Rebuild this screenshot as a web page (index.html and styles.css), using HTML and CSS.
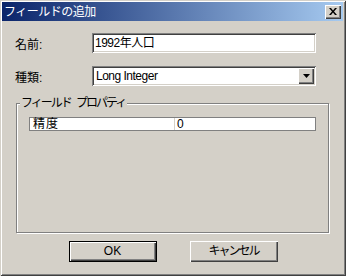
FILE: index.html
```html
<!DOCTYPE html>
<html>
<head>
  <title>フィールドの追加</title>
  <link rel="stylesheet" href="styles.css">
</head>
<body>
  <div class="window">
    <div class="titlebar">
      <span class="title">フィールドの追加</span>
      <span class="close-btn">
        <svg width="8" height="7" viewBox="0 0 8 7">
          <path d="M0 0h2l2 2.5L6 0h2L5 3.5 8 7H6L4 4.5 2 7H0l3-3.5z" fill="#000"/>
        </svg>
      </span>
    </div>

    <div class="content">
      <div class="form-row">
        <span class="label">名前:</span>
        <div class="textbox">1992年人口</div>
      </div>

      <div class="form-row second">
        <span class="label">種類:</span>
        <div class="textbox combo">
          <span class="combo-text">Long Integer</span>
          <span class="combo-btn">
            <svg width="7" height="4" viewBox="0 0 7 4">
              <path d="M0 0h7L3.5 4z" fill="#000"/>
            </svg>
          </span>
        </div>
      </div>

      <div class="group">
        <span class="legend">フィールド プロパティ</span>
        <div class="prop-table">
          <div class="prop-name">精度</div>
          <div class="prop-value">0</div>
        </div>
      </div>

      <div class="buttons">
        <div class="btn default">OK</div>
        <div class="btn kana">キャンセル</div>
      </div>
    </div>
  </div>
</body>
</html>
```

FILE: styles.css
```css
body {
  margin: 0;
  background: #D4D0C8;
  font-family: "Liberation Sans", "Noto Sans CJK JP", sans-serif;
  font-size: 12px;
  color: #000;
}

.window {
  width: 346px;
  height: 276px;
  box-sizing: border-box;
  padding: 2px 3px 3px 2px;
  background: #D4D0C8;
  box-shadow: inset 1px 1px 0 #D4D0C8, inset -1px -1px 0 #404040,
              inset 2px 2px 0 #fff, inset -2px -2px 0 #808080;
}

.titlebar {
  height: 19px;
  display: flex;
  align-items: center;
  justify-content: space-between;
  padding: 0 2px 0 2px;
  background: linear-gradient(to right, #0A246A, #A6CAF0);
}

.title {
  color: #fff;
  line-height: 18px;
  letter-spacing: -0.5px;
}

.close-btn {
  width: 16px;
  height: 14px;
  display: flex;
  align-items: center;
  justify-content: center;
  background: #D4D0C8;
  box-shadow: inset 1px 1px 0 #fff, inset -1px -1px 0 #404040,
              inset -2px -2px 0 #808080;
}

.content {
  padding: 12px 12px 0 13px;
}

.form-row {
  display: flex;
  align-items: center;
  height: 20px;
}

.form-row.second {
  margin-top: 13px;
}

.label {
  width: 77px;
}

.textbox {
  width: 224px;
  height: 20px;
  box-sizing: border-box;
  padding: 0 3px;
  line-height: 20px;
  letter-spacing: -0.5px;
  background: #fff;
  box-shadow: inset 1px 1px 0 #808080, inset -1px -1px 0 #fff,
              inset 2px 2px 0 #404040, inset -2px -2px 0 #D4D0C8;
}

.combo {
  display: flex;
  align-items: center;
  justify-content: space-between;
  padding: 2px 2px 2px 4px;
  line-height: 16px;
}

.combo-btn {
  width: 16px;
  height: 16px;
  display: flex;
  align-items: center;
  justify-content: center;
  background: #D4D0C8;
  box-shadow: inset 1px 1px 0 #fff, inset -1px -1px 0 #404040,
              inset -2px -2px 0 #808080;
}

.group {
  position: relative;
  margin: 17px 0 0 1px;
  width: 313px;
  height: 130px;
  box-sizing: border-box;
  border: 1px solid #808080;
  box-shadow: 1px 1px 0 #fff, inset 1px 1px 0 #fff;
}

.legend {
  position: absolute;
  top: -8px;
  left: 3px;
  padding: 0 2px 0 1px;
  line-height: 14px;
  letter-spacing: -2px;
  word-spacing: 4px;
  background: #D4D0C8;
}

.prop-table {
  display: flex;
  margin: 13px 0 0 12px;
  width: 287px;
  height: 14px;
  box-sizing: border-box;
  border: 1px solid #808080;
  background: #fff;
  line-height: 12px;
}

.prop-name {
  width: 141px;
  padding-left: 3px;
  border-right: 1px solid #D4D0C8;
  letter-spacing: 1px;
}

.prop-value {
  flex: 1;
  padding-left: 2px;
}

.buttons {
  display: flex;
  justify-content: center;
  gap: 33px;
  margin-top: 8px;
}

.btn {
  width: 88px;
  height: 21px;
  box-sizing: border-box;
  line-height: 21px;
  text-align: center;
  box-shadow: inset 1px 1px 0 #fff, inset -1px -1px 0 #404040,
              inset -2px -2px 0 #808080;
}

.btn.kana {
  letter-spacing: -2px;
}

.btn.default {
  border: 1px solid #000;
  line-height: 19px;
}
```
